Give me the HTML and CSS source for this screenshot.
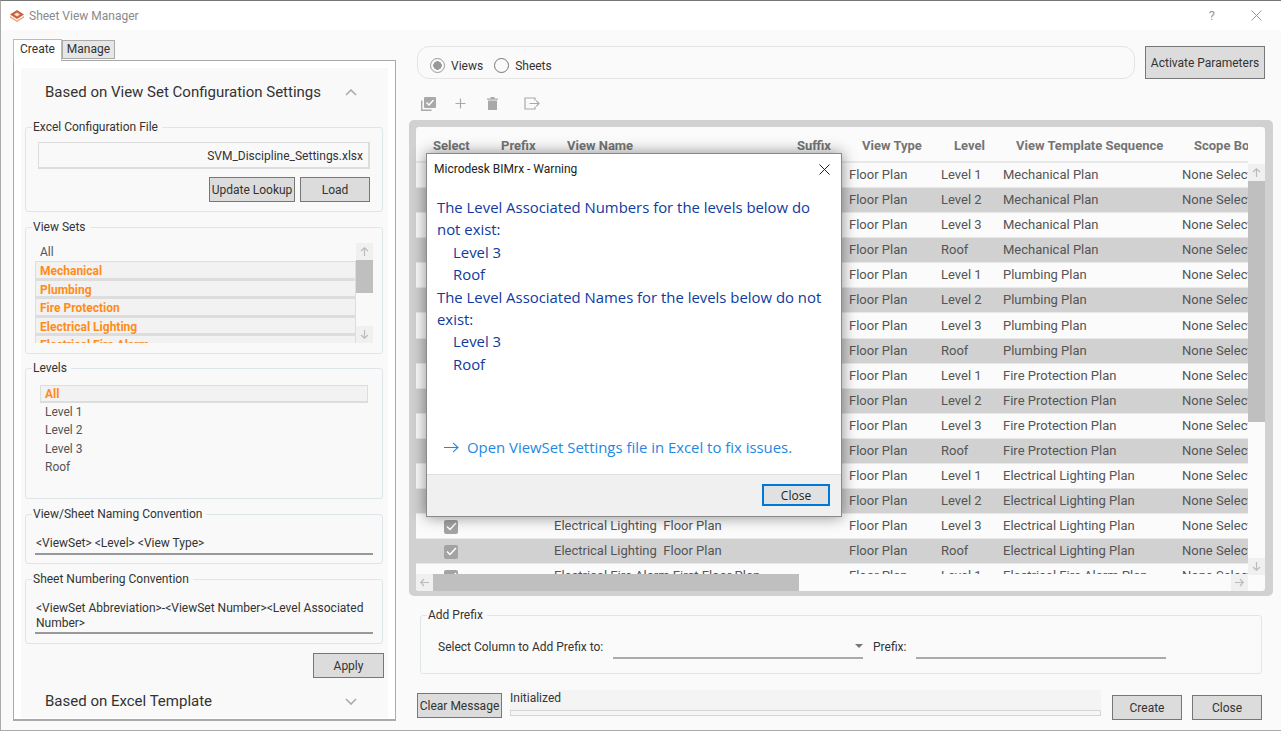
FILE: index.html
```html
<!DOCTYPE html>
<html lang="en">
<head>
<meta charset="utf-8">
<title>Sheet View Manager</title>
<link rel="stylesheet" href="styles.css">
</head>
<body>
<div class="window">
  <header class="titlebar">
    <svg class="logo" width="14" height="12" viewBox="0 0 14 12"><path d="M7 0 14 4.500 7 9 0 4.500Z" fill="#c9603f"/><path d="M0 6 7 10.500 14 6V7.500L7 12 0 7.500Z" fill="#e9a468"/><path d="M7 2.500 10 4.500 7 6.500 4 4.500Z" fill="#f7dfc6"/></svg>
    <span class="title">Sheet View Manager</span>
    <span class="help">?</span>
    <svg class="winclose" width="11" height="11" viewBox="0 0 11 11"><path d="M.5.5 10.500 10.500M10.500.5 .5 10.500" stroke="#9a9a9a" fill="none"/></svg>
  </header>
  <div class="main">
    <aside class="side">
      <div class="tabs"><span class="tab active">Create</span><span class="tab">Manage</span></div>
      <div class="tabpanel">
        <div class="inner">
          <div class="accordion first"><span>Based on View Set Configuration Settings</span>
            <svg width="12" height="7" viewBox="0 0 12 7"><path d="M1 6 6 1 11 6" fill="none" stroke="#aaa" stroke-width="1.600"/></svg></div>
          <fieldset class="group g-excel">
            <legend>Excel Configuration File</legend>
            <div class="filebox">SVM_Discipline_Settings.xlsx</div>
            <div class="filebtns"><button class="btn b-lookup">Update Lookup</button><button class="btn b-load">Load</button></div>
          </fieldset>
          <fieldset class="group g-sets">
            <legend>View Sets</legend>
            <div class="setlist">
              <div class="setitems">
                <div class="item">All</div>
                <div class="item sel">Mechanical</div>
                <div class="item sel">Plumbing</div>
                <div class="item sel">Fire Protection</div>
                <div class="item sel">Electrical Lighting</div>
                <div class="item sel">Electrical Fire Alarm</div>
              </div>
              <div class="vbar small">
                <div class="arrowbtn"><svg width="9" height="9" viewBox="0 0 9 9"><path d="M4.500 9V1M1 4 4.500.8 8 4" fill="none" stroke="#bbb" stroke-width="1.200"/></svg></div>
                <div class="thumb t-sets"></div>
                <div class="spacer"></div>
                <div class="arrowbtn"><svg width="9" height="9" viewBox="0 0 9 9"><path d="M4.500 0V8M1 5 4.500 8.200 8 5" fill="none" stroke="#bbb" stroke-width="1.200"/></svg></div>
              </div>
            </div>
          </fieldset>
          <fieldset class="group g-levels">
            <legend>Levels</legend>
            <div class="levellist">
              <div class="item sel">All</div>
              <div class="item">Level 1</div>
              <div class="item">Level 2</div>
              <div class="item">Level 3</div>
              <div class="item">Roof</div>
            </div>
          </fieldset>
          <fieldset class="group g-name">
            <legend>View/Sheet Naming Convention</legend>
            <div class="underlined">&lt;ViewSet&gt; &lt;Level&gt; &lt;View Type&gt;</div>
          </fieldset>
          <fieldset class="group g-num">
            <legend>Sheet Numbering Convention</legend>
            <div class="underlined">&lt;ViewSet Abbreviation&gt;-&lt;ViewSet Number&gt;&lt;Level Associated Number&gt;</div>
          </fieldset>
          <div class="applyrow"><button class="btn b-apply">Apply</button></div>
          <div class="accordion second"><span>Based on Excel Template</span>
            <svg width="12" height="7" viewBox="0 0 12 7"><path d="M1 1 6 6 11 1" fill="none" stroke="#aaa" stroke-width="1.600"/></svg></div>
        </div>
      </div>
    </aside>
    <section class="content">
      <div class="toprow">
        <div class="radiobox">
          <span class="radio on"></span><span class="rlabel">Views</span>
          <span class="radio"></span><span class="rlabel">Sheets</span>
        </div>
        <button class="btn b-activate">Activate Parameters</button>
      </div>
      <div class="toolbar">
        <svg width="15" height="14" viewBox="0 0 15 14"><path d="M.7 3.500v9.800h9.800" fill="none" stroke="#a9a9a9" stroke-width="1.400"/><rect x="3" y="0" width="12" height="11" rx="1" fill="#a9a9a9"/><path d="M5.500 5.500 8 8 12.500 3" fill="none" stroke="#fff" stroke-width="1.400"/></svg>
        <svg width="11" height="11" viewBox="0 0 11 11"><path d="M5.500 .5v10M.5 5.500h10" stroke="#a9a9a9" stroke-width="1.200" fill="none"/></svg>
        <svg width="11" height="13" viewBox="0 0 11 13"><path d="M0 1.500h11v1.300H0zM3.500 0h4v1.500h-4zM1 3.500h9V13H1z" fill="#a9a9a9"/></svg>
        <svg width="16" height="13" viewBox="0 0 16 13"><path d="M11 3.500V1H1v11h10V9.500M5.500 6.500H15M12.200 3.600 15 6.500 12.200 9.400" fill="none" stroke="#a9a9a9" stroke-width="1.200"/></svg>
      </div>
      <div class="gridframe">
        <div class="grid">
          <div class="gridleft">
            <div class="ghead">
              <span class="h-sel">Select</span><span class="h-pre">Prefix</span><span class="h-name">View Name</span><span class="h-suf">Suffix</span><span class="h-type">View Type</span><span class="h-lev">Level</span><span class="h-tpl">View Template Sequence</span><span class="h-scope">Scope Bo</span>
            </div>
            <div class="gbody" id="gbody"></div>
            <div class="hbar">
              <div class="arrowbtn"><svg width="9" height="9" viewBox="0 0 9 9"><path d="M9 4.500H1M4 1 .8 4.500 4 8" fill="none" stroke="#bbb" stroke-width="1.200"/></svg></div>
              <div class="thumb t-h"></div>
              <div class="spacer"></div>
              <div class="arrowbtn"><svg width="9" height="9" viewBox="0 0 9 9"><path d="M0 4.500H8M5 1 8.200 4.500 5 8" fill="none" stroke="#bbb" stroke-width="1.200"/></svg></div>
            </div>
          </div>
          <div class="vbar main-v">
            <div class="arrowbtn"><svg width="9" height="9" viewBox="0 0 9 9"><path d="M4.500 9V1M1 4 4.500.8 8 4" fill="none" stroke="#bbb" stroke-width="1.200"/></svg></div>
            <div class="thumb t-v"></div>
            <div class="spacer"></div>
            <div class="arrowbtn"><svg width="9" height="9" viewBox="0 0 9 9"><path d="M4.500 0V8M1 5 4.500 8.200 8 5" fill="none" stroke="#bbb" stroke-width="1.200"/></svg></div>
          </div>
        </div>
      </div>
      <fieldset class="group g-prefix">
        <legend>Add Prefix</legend>
        <div class="prefixrow">
          <label class="plabel">Select Column to Add Prefix to:</label>
          <div class="combo"><span class="caret"></span></div>
          <label class="plabel2">Prefix:</label>
          <div class="prefixinput"></div>
        </div>
      </fieldset>
      <div class="bottomrow">
        <button class="btn b-clear">Clear Message</button>
        <div class="status"><div class="statustext">Initialized</div><div class="progress"></div></div>
        <button class="btn b-create">Create</button>
        <button class="btn b-close">Close</button>
      </div>
    </section>
  </div>

  <div class="dialog">
    <div class="dtitle"><span>Microdesk BIMrx - Warning</span>
      <svg width="11" height="11" viewBox="0 0 11 11"><path d="M.5.5 10.500 10.500M10.500.5 .5 10.500" stroke="#222" fill="none"/></svg></div>
    <div class="dbody">
      <p>The Level Associated Numbers for the levels below do not exist:</p>
      <p class="ind">Level 3</p>
      <p class="ind">Roof</p>
      <p>The Level Associated Names for the levels below do not exist:</p>
      <p class="ind">Level 3</p>
      <p class="ind">Roof</p>
    </div>
    <div class="dlink"><svg width="15" height="11" viewBox="0 0 15 11"><path d="M0 5.500H14M9 .8 14 5.500 9 10.200" fill="none" stroke="#1e88e5" stroke-width="1.100"/></svg><span>Open ViewSet Settings file in Excel to fix issues.</span></div>
    <div class="dfoot"><button class="dclose">Close</button></div>
  </div>
</div>
<script src="app.js"></script>
</body>
</html>
```

FILE: app.js
```js
var sets = ["Mechanical", "Plumbing", "Fire Protection", "Electrical Lighting"];
var levels = ["Level 1", "Level 2", "Level 3", "Roof"];
var html = "";
var n = 0;
function row(name, level, tpl, alt) {
  return '<div class="grow' + (alt ? " alt" : "") + '"><span class="c-sel"><span class="check"><svg width="11" height="9" viewBox="0 0 11 9"><path d="M1 4.500 4 7.500 10 1" fill="none" stroke="#fff" stroke-width="1.500"/></svg></span></span>' +
    '<span class="c-name">' + name + '</span><span class="c-type">Floor Plan</span><span class="c-lev">' + level + '</span><span class="c-tpl">' + tpl + '</span><span class="c-scope">None Selected</span></div>';
}
sets.forEach(function (s) {
  levels.forEach(function (l) {
    var label = s === "Electrical Lighting" ? "Electrical Lighting&nbsp; Floor Plan" : s + " Floor Plan";
    html += row(label, l, s + " Plan", n % 2 === 1);
    n++;
  });
});
html += row("Electrical Fire Alarm First Floor Plan", "Level 1", "Electrical Fire Alarm Plan", false);
document.getElementById("gbody").innerHTML = html;
```

FILE: styles.css
```css
* { box-sizing: border-box; }
html, body { margin: 0; padding: 0; }
body { font-family: Roboto, "Liberation Sans", sans-serif; font-size: 12px; color: #333; background: #fafafa; overflow: hidden; }
.window { width: 1281px; height: 731px; position: relative; display: flex; flex-direction: column; background: #fafafa; border-top: 1px solid #777; border-left: 1px solid #aaa; border-bottom: 1px solid #aaa; overflow: hidden; }
.titlebar { height: 29px; flex: none; background: #fff; display: flex; align-items: center; padding: 0 19px 0 9px; }
.logo { margin-right: 5px; }
.title { color: #8a8a8a; font-size: 12px; flex: 1; }
.help { color: #999; font-size: 13px; margin-right: 36px; }
.main { flex: 1; display: flex; min-height: 0; }
button { font-family: inherit; }
.btn { background: #dcdcdc; border: 1px solid #777; color: #333; font-size: 12px; padding: 0; border-radius: 0; white-space: nowrap; }

.side { width: 396px; flex: none; padding: 8px 0 0 12px; }
.tabs { display: flex; align-items: flex-end; height: 22px; position: relative; z-index: 1; }
.tab { height: 19px; width: 53px; margin-bottom: 1px; padding-bottom: 1px; background: #e6e6e6; border: 1px solid #aaa; display: flex; align-items: center; justify-content: center; color: #333; }
.tab.active { width: 49px; height: 22px; margin-bottom: -1px; padding-bottom: 3px; background: #fff; border-bottom: 0; border-color: #bbb; }
.tabpanel { width: 383px; height: 661px; background: #fff; border: 1px solid #aaa; border-bottom-width: 2px; padding: 7px 7px 1px 7px; }
.inner { background: #f9f9f9; height: 100%; padding: 0 5px 0 4px; }
.accordion { display: flex; align-items: center; justify-content: space-between; height: 46px; padding: 0 26px 0 20px; font-size: 15px; color: #333; }
.accordion.first { padding-top: 2px; }
.accordion.second { height: 36px; margin-top: 5px; }
.group { margin: 0; border: 1px solid #dfe6ea; border-radius: 3px; padding: 0; min-width: 0; background: transparent; }
.group legend { margin-left: 6px; padding: 0 4px 0 1px; font-size: 12px; color: #333; line-height: 15px; }
.g-excel { height: 92px; margin-top: 6px; padding-top: 7px; }
.filebox { height: 27px; margin: 0 12px; background: #f9f9f9; border: 1px solid #ddd; border-width: 1px 2px 2px 1px; text-align: right; padding: 6px 5px 0 0; color: #333; }
.filebtns { display: flex; justify-content: flex-end; gap: 5px; margin: 8px 12px 0; }
.b-lookup { width: 86px; height: 25px; }
.b-load { width: 70px; height: 25px; }
.g-sets { height: 134px; margin-top: 8px; padding-top: 8px; }
.setlist { display: flex; height: 100px; margin: 0 9px; overflow: hidden; }
.setitems { width: 321px; flex: none; }
.item { height: 18.400px; line-height: 19px; padding-left: 5px; color: #555; }
.item.sel { background: #f2f2f2; border: 1px solid #ddd; border-width: 1px 1px 2px 1px; color: #ff8c1a; font-weight: 700; padding-left: 4px; line-height: 18px; }
.vbar { flex: none; display: flex; flex-direction: column; }
.vbar.small { width: 17px; }
.arrowbtn { width: 17px; height: 17px; flex: none; background: #f0f0f0; display: flex; align-items: center; justify-content: center; }
.thumb { background: #bfbfbf; flex: none; }
.spacer { flex: 1; }
.t-sets { height: 33px; }
.g-levels { height: 138px; margin-top: 7px; padding-top: 9px; }
.levellist { margin: 0 14px; }
.levellist .item.sel { height: 18px; line-height: 16px; }
.g-name { height: 57px; margin-top: 8px; padding-top: 9px; }
.g-num { height: 72px; margin-top: 8px; padding-top: 9px; }
.underlined { margin: 0 9px; border-bottom: 2px solid #999; line-height: 14.500px; font-size: 12px; padding: 5px 1px 2px; color: #333; }
.applyrow { display: flex; justify-content: flex-end; margin-top: 9px; margin-right: -1px; }
.b-apply { width: 71px; height: 25px; }

.content { flex: 1; min-width: 0; padding: 16px 0 0 16px; }
.toprow { display: flex; align-items: flex-start; height: 34px; margin-left: 4px; }
.radiobox { width: 718px; height: 33px; border: 1px solid #e4e4e4; border-radius: 12px; display: flex; align-items: center; padding: 6px 0 0 12px; margin-right: 10px; background: #fafafa; }
.radio { width: 15px; height: 15px; border: 1.500px solid #777; border-radius: 50%; margin-right: 6px; background: #fafafa; }
.radio.on { border-color: #999; background: radial-gradient(circle, #999 0 4px, #fafafa 4.500px); }
.rlabel { font-size: 12px; color: #333; margin-right: 11px; }
.b-activate { width: 120px; height: 33px; }
.toolbar { height: 40px; margin-left: 4px; display: flex; align-items: center; padding: 7px 0 0 4px; }
.toolbar svg:nth-child(1) { margin-right: 19px; }
.toolbar svg:nth-child(2) { margin-right: 21px; }
.toolbar svg:nth-child(3) { margin-right: 26px; }
.gridframe { width: 864px; height: 476px; margin-left: -4px; background: #d1d1d1; border-radius: 5px; padding: 7px 8px 5px 7px; }
.grid { background: #fbfbfb; height: 100%; border-radius: 3px; display: flex; overflow: hidden; }
.gridleft { width: 832px; flex: none; display: flex; flex-direction: column; position: relative; }
.ghead { height: 36px; flex: none; position: relative; border-bottom: 2px solid #e8e8e8; font-weight: 700; color: #757575; font-size: 13px; white-space: nowrap; overflow: hidden; }
.ghead span { position: absolute; top: 11px; line-height: 15px; }
.h-sel { left: 17px; } .h-pre { left: 85px; } .h-name { left: 151px; } .h-suf { left: 381px; }
.h-type { left: 446px; } .h-lev { left: 538px; } .h-tpl { left: 600px; } .h-scope { left: 778px; }
.gbody { height: 411px; overflow: hidden; flex: none; }
.grow { height: 25.080px; display: flex; align-items: center; padding-bottom: 1px; border-bottom: 1px solid #e8e8e8; color: #555; font-size: 13px; white-space: nowrap; background: #fbfbfb; }
.grow.alt { background: #d1d1d1; }
.c-sel { width: 138px; flex: none; padding-left: 28px; display: flex; }
.check { width: 14px; height: 14px; margin-top: 2px; background: #a3a3a3; border-radius: 2px; display: flex; align-items: center; justify-content: center; }
.c-name { width: 295px; flex: none; }
.c-type { width: 92px; flex: none; }
.c-lev { width: 62px; flex: none; }
.c-tpl { width: 179px; flex: none; }
.c-scope { width: 66px; flex: none; overflow: hidden; }
.hbar { position: absolute; left: 0; right: 0; top: 447px; height: 17px; display: flex; background: #fbfbfb; }
.t-h { width: 366px; }
.main-v { width: 17px; height: 411px; margin-top: 37px; }
.t-v { height: 241px; }
.g-prefix { width: 842px; height: 66px; margin-top: 12px; margin-left: 7px; padding-top: 6px; }
.prefixrow { display: flex; align-items: flex-end; height: 30px; padding-left: 17px; }
.plabel { width: 175px; flex: none; line-height: 20px; padding-bottom: 2px; }
.plabel2 { width: 43px; margin-left: 10px; flex: none; line-height: 20px; padding-bottom: 2px; }
.combo { width: 250px; height: 20px; flex: none; border-bottom: 2px solid #aaa; position: relative; }
.caret { position: absolute; right: 0; top: 5px; border: 4px solid transparent; border-top: 4px solid #777; border-bottom: 0; }
.prefixinput { width: 250px; height: 20px; flex: none; border-bottom: 2px solid #aaa; }
.bottomrow { display: flex; margin-left: 4px; height: 31px; margin-top: 16px; align-items: flex-start; }
.b-clear { width: 85px; height: 25px; margin: 3px 8px 0 0; flex: none; }
.status { width: 591px; height: 26px; flex: none; background: #f4f4f4; margin-right: 11px; }
.statustext { line-height: 15px; padding-top: 1px; height: 15px; }
.progress { height: 6px; margin-top: 5px; background: #f6f6f6; border: 1px solid #d5d5d5; }
.b-create, .b-close { width: 70px; height: 25px; flex: none; margin-top: 5px; }
.b-close { margin-left: 10px; }

.dialog { position: absolute; left: 425px; top: 152px; width: 416px; height: 364px; background: #fff; border: 1px solid #8a8a8a; box-shadow: 0 0 14px rgba(0,0,0,.45); display: flex; flex-direction: column; font-family: "Open Sans", "Noto Sans", sans-serif; }
.dtitle { height: 30px; flex: none; display: flex; justify-content: space-between; align-items: center; padding: 0 11px 0 7px; color: #222; font-family: Roboto, sans-serif; font-size: 12px; }
.dbody { height: 226px; flex: none; padding: 12px 10px 0 10px; color: #103a9e; font-size: 14.900px; line-height: 22.400px; }
.dbody p { margin: 0; }
.dbody .ind { padding-left: 16px; }
.dlink { height: 64px; flex: none; padding: 26px 0 0 17px; color: #1e88e5; font-size: 14.900px; line-height: 22px; display: flex; align-items: flex-start; }
.dlink svg { margin: 6px 8px 0 0; }
.dlink span { white-space: nowrap; }
.dfoot { flex: 1; background: #f0f0f0; border-top: 1px solid #dfdfdf; display: flex; justify-content: flex-end; align-items: flex-start; padding: 9px 11px 0 0; }
.dclose { width: 68px; height: 22px; background: #e1e1e1; border: 2px solid #0078d7; font-size: 12px; color: #222; padding: 0; font-family: "Open Sans", sans-serif; }
```
